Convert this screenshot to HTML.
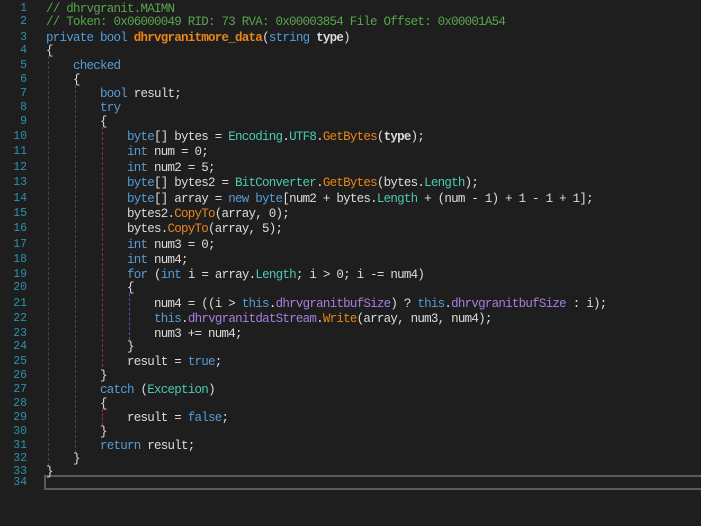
<!DOCTYPE html>
<html><head><meta charset="utf-8"><style>
body{margin:0;width:701px;height:526px;background:#1e1e1e;overflow:hidden;position:relative;font-family:"Liberation Mono",monospace;font-size:12.5px;letter-spacing:-0.75px;color:#dcdcdc}
.l{position:absolute;left:0;height:14px;line-height:14px;white-space:pre;width:701px;margin-top:2px}
.n{position:absolute;left:0;width:27px;text-align:right;color:#2b91af;letter-spacing:0;font-size:11.5px}
.c{position:absolute;left:46px}
.cm{color:#57a64a}.k{color:#569cd6}.m{color:#e8861a}.t{color:#4ec9b0}.f{color:#a77fe0}.b{font-weight:bold}
.g{position:absolute;width:0;border-left:1px dashed}
.hl{position:absolute;left:44px;top:475px;width:660px;height:11px;border:2px solid #5a5a5a;border-right:none}
</style></head><body>
<div class="g" style="left:48px;top:56px;height:410px;border-color:#2f4866"></div>
<div class="g" style="left:75px;top:85px;height:368px;border-color:#4a4a4a"></div>
<div class="g" style="left:102px;top:127px;height:240px;border-color:#a03030"></div>
<div class="g" style="left:102px;top:409px;height:16px;border-color:#a03030"></div>
<div class="g" style="left:129px;top:293px;height:47px;border-color:#7040a0"></div>
<div class="hl"></div>
<div class="l" style="top:0px"><span class="n">1</span><span class="c"><span class="cm">// dhrvgranit.MAIMN</span></span></div>
<div class="l" style="top:13px"><span class="n">2</span><span class="c"><span class="cm">// Token: 0x06000049 RID: 73 RVA: 0x00003854 File Offset: 0x00001A54</span></span></div>
<div class="l" style="top:29px"><span class="n">3</span><span class="c"><span class="k">private bool</span> <span class="m b">dhrvgranitmore_data</span>(<span class="k">string</span> <span class="b">type</span>)</span></div>
<div class="l" style="top:42px"><span class="n">4</span><span class="c">{</span></div>
<div class="l" style="top:57px"><span class="n">5</span><span class="c">    <span class="k">checked</span></span></div>
<div class="l" style="top:71px"><span class="n">6</span><span class="c">    {</span></div>
<div class="l" style="top:85px"><span class="n">7</span><span class="c">        <span class="k">bool</span> result;</span></div>
<div class="l" style="top:99px"><span class="n">8</span><span class="c">        <span class="k">try</span></span></div>
<div class="l" style="top:113px"><span class="n">9</span><span class="c">        {</span></div>
<div class="l" style="top:128px"><span class="n">10</span><span class="c">            <span class="k">byte</span>[] bytes = <span class="t">Encoding</span>.<span class="t">UTF8</span>.<span class="m">GetBytes</span>(<span class="b">type</span>);</span></div>
<div class="l" style="top:143px"><span class="n">11</span><span class="c">            <span class="k">int</span> num = 0;</span></div>
<div class="l" style="top:159px"><span class="n">12</span><span class="c">            <span class="k">int</span> num2 = 5;</span></div>
<div class="l" style="top:174px"><span class="n">13</span><span class="c">            <span class="k">byte</span>[] bytes2 = <span class="t">BitConverter</span>.<span class="m">GetBytes</span>(bytes.<span class="t">Length</span>);</span></div>
<div class="l" style="top:190px"><span class="n">14</span><span class="c">            <span class="k">byte</span>[] array = <span class="k">new byte</span>[num2 + bytes.<span class="t">Length</span> + (num - 1) + 1 - 1 + 1];</span></div>
<div class="l" style="top:205px"><span class="n">15</span><span class="c">            bytes2.<span class="m">CopyTo</span>(array, 0);</span></div>
<div class="l" style="top:220px"><span class="n">16</span><span class="c">            bytes.<span class="m">CopyTo</span>(array, 5);</span></div>
<div class="l" style="top:236px"><span class="n">17</span><span class="c">            <span class="k">int</span> num3 = 0;</span></div>
<div class="l" style="top:251px"><span class="n">18</span><span class="c">            <span class="k">int</span> num4;</span></div>
<div class="l" style="top:266px"><span class="n">19</span><span class="c">            <span class="k">for</span> (<span class="k">int</span> i = array.<span class="t">Length</span>; i &gt; 0; i -= num4)</span></div>
<div class="l" style="top:279px"><span class="n">20</span><span class="c">            {</span></div>
<div class="l" style="top:295px"><span class="n">21</span><span class="c">                num4 = ((i &gt; <span class="k">this</span>.<span class="f">dhrvgranitbufSize</span>) ? <span class="k">this</span>.<span class="f">dhrvgranitbufSize</span> : i);</span></div>
<div class="l" style="top:310px"><span class="n">22</span><span class="c">                <span class="k">this</span>.<span class="f">dhrvgranitdatStream</span>.<span class="m">Write</span>(array, num3, num4);</span></div>
<div class="l" style="top:325px"><span class="n">23</span><span class="c">                num3 += num4;</span></div>
<div class="l" style="top:338px"><span class="n">24</span><span class="c">            }</span></div>
<div class="l" style="top:353px"><span class="n">25</span><span class="c">            result = <span class="k">true</span>;</span></div>
<div class="l" style="top:367px"><span class="n">26</span><span class="c">        }</span></div>
<div class="l" style="top:381px"><span class="n">27</span><span class="c">        <span class="k">catch</span> (<span class="t">Exception</span>)</span></div>
<div class="l" style="top:395px"><span class="n">28</span><span class="c">        {</span></div>
<div class="l" style="top:409px"><span class="n">29</span><span class="c">            result = <span class="k">false</span>;</span></div>
<div class="l" style="top:423px"><span class="n">30</span><span class="c">        }</span></div>
<div class="l" style="top:437px"><span class="n">31</span><span class="c">        <span class="k">return</span> result;</span></div>
<div class="l" style="top:450px"><span class="n">32</span><span class="c">    }</span></div>
<div class="l" style="top:463px"><span class="n">33</span><span class="c">}</span></div>
<div class="l" style="top:474px"><span class="n">34</span></div>
</body></html>
